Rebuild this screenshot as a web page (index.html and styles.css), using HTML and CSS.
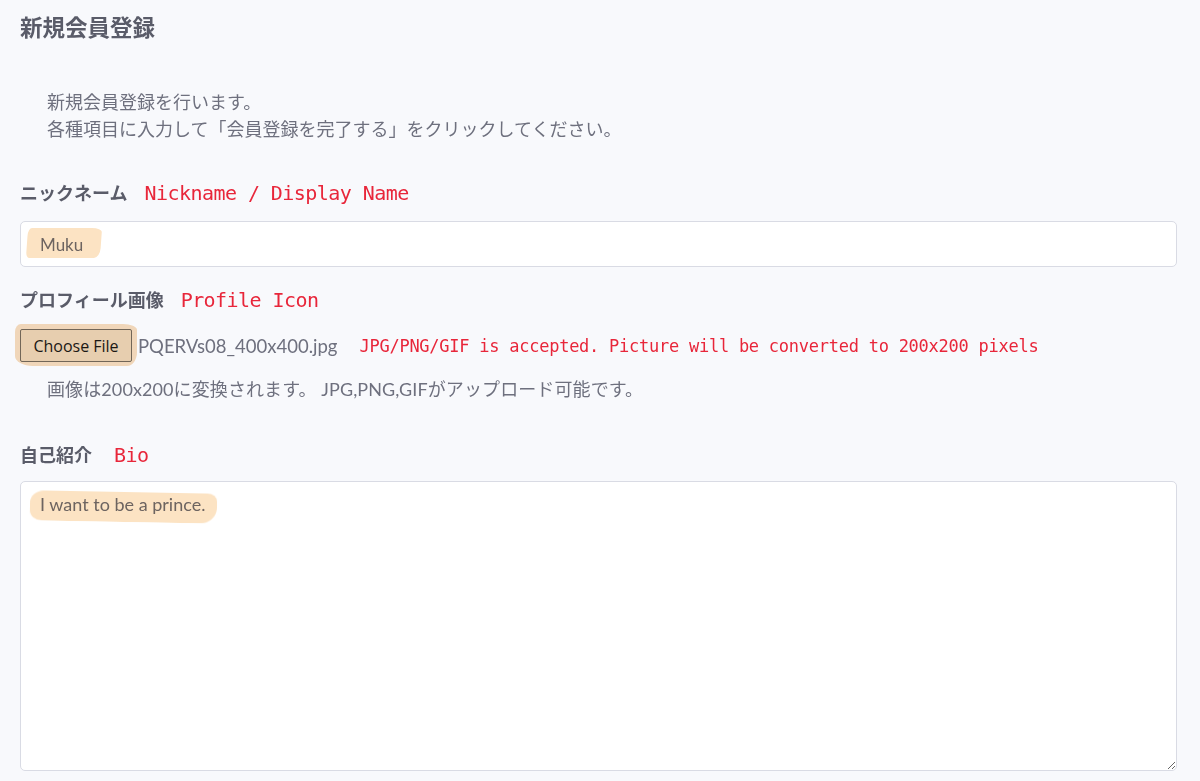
FILE: index.html
```html
<!DOCTYPE html>
<html lang="ja">
<head>
<meta charset="utf-8">
<title>新規会員登録</title>
<link rel="stylesheet" href="styles.css">
</head>
<body>
<div class="page">
  <h1 class="title">新規会員登録</h1>

  <p class="intro">新規会員登録を行います。<br>各種項目に入力して「会員登録を完了する」をクリックしてください。</p>

  <div class="field field-nick">
    <div class="label-row">
      <label class="label">ニックネーム</label>
      <span class="note">Nickname / Display Name</span>
    </div>
    <div class="control-wrap">
      <input class="control" type="text" value="Muku">
      <span class="hl hl-nick"></span>
    </div>
  </div>

  <div class="field field-icon">
    <div class="label-row">
      <label class="label">プロフィール画像</label>
      <span class="note">Profile Icon</span>
    </div>
    <div class="file-row">
      <span class="file-btn-wrap">
        <button class="file-btn" type="button">Choose File</button>
        <span class="hl hl-btn"></span>
      </span>
      <span class="file-name">PQERVs08_400x400.jpg</span>
      <span class="note note-small">JPG/PNG/GIF is accepted. Picture will be converted to 200x200 pixels</span>
    </div>
    <p class="help">画像は200x200に変換されます。 JPG,PNG,GIFがアップロード可能です。</p>
  </div>

  <div class="field field-bio">
    <div class="label-row">
      <label class="label">自己紹介</label>
      <span class="note note-bio">Bio</span>
    </div>
    <div class="control-wrap">
      <textarea class="control textarea">I want to be a prince.</textarea>
      <span class="hl hl-bio"></span>
    </div>
  </div>
</div>
</body>
</html>
```

FILE: styles.css
```css
html, body {
  margin: 0;
  padding: 0;
  overflow: hidden;
  background: #f8f9fc;
}

body {
  font-family: "Lato", "Noto Sans CJK JP", sans-serif;
  color: #6e707e;
  font-size: 18px;
}

.page {
  padding: 14px 23px 0 20px;
}

.title {
  margin: 0;
  font-size: 22.5px;
  line-height: 27px;
  font-weight: 700;
  color: #5a5c69;
}

.intro {
  margin: 48px 0 0 0;
  padding-left: 27px;
  font-size: 18px;
  line-height: 27px;
  color: #6e707e;
}

.field-nick { margin-top: 37px; }
.field-icon { margin-top: 20px; }
.field-bio { margin-top: 39px; }

.label-row {
  display: flex;
  align-items: baseline;
  gap: 17px;
  line-height: 27px;
}

.label {
  font-size: 18px;
  font-weight: 700;
  color: #5a5c69;
}

.note {
  font-family: "DejaVu Sans Mono", monospace;
  font-size: 20px;
  letter-spacing: -0.55px;
  color: #e8263a;
}

.note-bio { margin-left: 5px; }

.control-wrap {
  position: relative;
  margin-top: 14px;
}

.control {
  display: block;
  box-sizing: border-box;
  width: 100%;
  height: 46px;
  margin: 0;
  padding: 0 19px;
  border: 1px solid #d9dbe4;
  border-radius: 5px;
  background: #fff;
  font-family: "Lato", "Noto Sans CJK JP", sans-serif;
  font-size: 17px;
  color: #6e707e;
  outline: none;
}

.textarea {
  height: 290px;
  padding: 9px 19px;
  font-size: 18px;
  line-height: 27px;
  resize: vertical;
}

.field-bio .control-wrap { margin-top: 12px; }

.hl {
  position: absolute;
  background: #fce3c3;
  mix-blend-mode: multiply;
  pointer-events: none;
}

.hl-nick {
  left: 7px;
  top: 7px;
  width: 74px;
  height: 30px;
  border-radius: 4px 10px 6px 3px / 8px 4px 10px 6px;
  transform: skewX(-4deg);
}

.hl-bio {
  left: 10px;
  top: 11px;
  width: 187px;
  height: 30px;
  border-radius: 14px 10px 16px 12px / 12px 8px 16px 10px;
  transform: rotate(1deg);
}

.file-row {
  display: flex;
  align-items: center;
  margin-top: 15px;
  height: 33px;
}

.file-btn-wrap {
  position: relative;
  display: inline-flex;
}

.file-btn {
  box-sizing: border-box;
  height: 33px;
  width: 112px;
  padding: 0;
  margin: 0;
  border: 1px solid #767676;
  border-radius: 2px;
  background: #efefef;
  font-family: "Open Sans", "Liberation Sans", sans-serif;
  font-size: 16px;
  color: #1b1b1b;
}

.hl-btn {
  left: -5px;
  top: -5px;
  width: 122px;
  height: 42px;
  border-radius: 6px 14px 10px 18px / 8px 6px 14px 10px;
  background: #f7dcbb;
}

.file-name {
  margin-left: 6px;
  font-size: 18.5px;
  color: #6e707e;
}

.note-small {
  margin-left: 22px;
  font-size: 17px;
  letter-spacing: -0.25px;
}

.help {
  margin: 14px 0 0 0;
  padding-left: 27px;
  line-height: 27px;
  font-size: 18px;
  letter-spacing: 0.1px;
  color: #6e707e;
}
```
